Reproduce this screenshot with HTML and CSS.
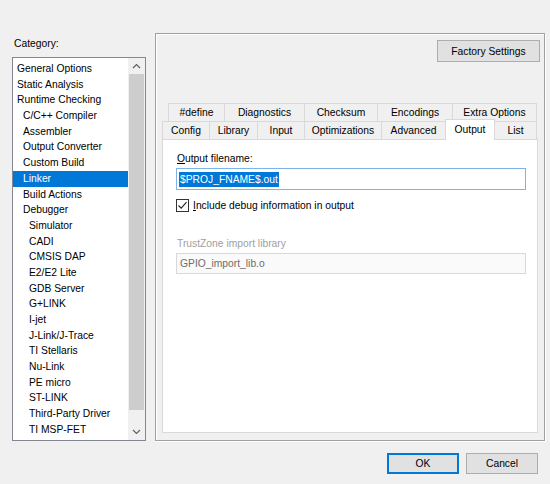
FILE: index.html
```html
<!DOCTYPE html>
<html>
<head>
<meta charset="utf-8">
<link rel="stylesheet" href="styles.css">
</head>
<body>
<div class="dialog">
  <div class="main">
    <div class="left">
      <div class="cat-label">Category:</div>
      <div class="listbox">
        <ul class="items">
          <li class="l0">General Options</li>
          <li class="l0">Static Analysis</li>
          <li class="l0">Runtime Checking</li>
          <li class="l1">C/C++ Compiler</li>
          <li class="l1">Assembler</li>
          <li class="l1">Output Converter</li>
          <li class="l1">Custom Build</li>
          <li class="l1 sel">Linker</li>
          <li class="l1">Build Actions</li>
          <li class="l1">Debugger</li>
          <li class="l2">Simulator</li>
          <li class="l2">CADI</li>
          <li class="l2">CMSIS DAP</li>
          <li class="l2">E2/E2 Lite</li>
          <li class="l2">GDB Server</li>
          <li class="l2">G+LINK</li>
          <li class="l2">I-jet</li>
          <li class="l2">J-Link/J-Trace</li>
          <li class="l2">TI Stellaris</li>
          <li class="l2">Nu-Link</li>
          <li class="l2">PE micro</li>
          <li class="l2">ST-LINK</li>
          <li class="l2">Third-Party Driver</li>
          <li class="l2">TI MSP-FET</li>
        </ul>
        <div class="scrollbar">
          <div class="sb-btn"><svg width="9" height="6" viewBox="0 0 9 6"><path d="M1 5 L4.5 1.5 L8 5" fill="none" stroke="#606060" stroke-width="1.2"/></svg></div>
          <div class="sb-track"><div class="sb-thumb"></div></div>
          <div class="sb-btn"><svg width="9" height="6" viewBox="0 0 9 6"><path d="M1 1 L4.5 4.5 L8 1" fill="none" stroke="#606060" stroke-width="1.2"/></svg></div>
        </div>
      </div>
    </div>
    <div class="frame">
      <div class="frame-top">
        <button class="btn factory">Factory Settings</button>
      </div>
      <div class="tabctl">
        <div class="tabrow row1">
          <div class="tab" style="width:56px">#define</div>
          <div class="tab" style="width:80px">Diagnostics</div>
          <div class="tab" style="width:73px">Checksum</div>
          <div class="tab" style="width:75px">Encodings</div>
          <div class="tab" style="width:85px">Extra Options</div>
        </div>
        <div class="tabrow row2">
          <div class="tab" style="width:47px">Config</div>
          <div class="tab" style="width:48px">Library</div>
          <div class="tab" style="width:47px">Input</div>
          <div class="tab" style="width:77px">Optimizations</div>
          <div class="tab" style="width:64px">Advanced</div>
          <div class="tab active" style="width:50px">Output</div>
          <div class="tab" style="width:42px">List</div>
        </div>
        <div class="page">
          <div class="field-label"><u>O</u>utput filename:</div>
          <div class="textbox focus"><span class="hl">$PROJ_FNAME$.out</span></div>
          <div class="check-row">
            <span class="checkbox"><svg width="11" height="11" viewBox="0 0 11 11"><path d="M1.5 5.5 L4.2 8.2 L9.5 2.2" fill="none" stroke="#222" stroke-width="1.1"/></svg></span>
            <span class="check-label"><u>I</u>nclude debug information in output</span>
          </div>
          <div class="field-label disabled">TrustZone import library</div>
          <div class="textbox dis">GPIO_import_lib.o</div>
        </div>
      </div>
    </div>
  </div>
  <div class="footer">
    <button class="btn ok">OK</button>
    <button class="btn cancel">Cancel</button>
  </div>
</div>
</body>
</html>
```
FILE: styles.css
```css
html, body {
  margin: 0;
  padding: 0;
}
body {
  width: 550px;
  height: 484px;
  overflow: hidden;
  background: #f0f0f0;
  font-family: "Liberation Sans", Arial, sans-serif;
  font-size: 10.3px;
  color: #000;
}
.dialog {
  display: flex;
  flex-direction: column;
  padding: 33px 5px 0 12px;
}
.main {
  display: flex;
  gap: 9px;
}
.left {
  width: 134px;
  display: flex;
  flex-direction: column;
}
.cat-label {
  padding: 4px 0 0 2px;
  line-height: 14px;
  margin-bottom: 6px;
}
.listbox {
  box-sizing: border-box;
  height: 384px;
  border: 1px solid #828790;
  background: #fff;
  display: flex;
}
.items {
  list-style: none;
  margin: 0;
  padding: 3px 0 0 0;
  flex: 1;
}
.items li {
  height: 15.7px;
  line-height: 15.7px;
  white-space: nowrap;
}
.l0 { padding-left: 4px; }
.l1 { padding-left: 10px; }
.l2 { padding-left: 16px; }
.items li.sel {
  background: #0078d7;
  color: #fff;
}
.scrollbar {
  width: 17px;
  display: flex;
  flex-direction: column;
  background: #f0f0f0;
}
.sb-btn {
  height: 16px;
  display: flex;
  align-items: center;
  justify-content: center;
}
.sb-btn:last-child {
  height: 17px;
}
.sb-track {
  flex: 1;
  padding: 0 1px;
}
.sb-thumb {
  height: 336px;
  background: #cdcdcd;
}
.frame {
  box-sizing: border-box;
  width: 390px;
  height: 408px;
  border: 1px solid #a0a0a0;
  box-shadow: inset 1px 1px 0 #fff, 1px 1px 0 #fff;
  padding: 6px 4px 7px 6px;
  display: flex;
  flex-direction: column;
}
.frame-top {
  display: flex;
  justify-content: flex-end;
  height: 22px;
  margin-bottom: 41px;
}
.btn {
  font-family: "Liberation Sans", Arial, sans-serif;
  font-size: 10.3px;
  color: #000;
  background: #e1e1e1;
  border: 1px solid #adadad;
  padding: 0;
  margin: 0;
  box-sizing: border-box;
}
.factory {
  width: 103px;
  height: 22px;
}
.tabctl {
  flex: 1;
  display: flex;
  flex-direction: column;
  margin-right: 2px;
}
.tabrow {
  display: flex;
  height: 18px;
}
.row1 {
  margin-left: 6px;
}
.tab {
  box-sizing: border-box;
  height: 18px;
  line-height: 17px;
  text-align: center;
  white-space: nowrap;
  border-top: 1px solid #d9d9d9;
  border-left: 1px solid #d9d9d9;
  background: #f0f0f0;
}
.tab:last-child {
  border-right: 1px solid #d9d9d9;
}
.tab.active {
  background: #fff;
  height: 21px;
  margin-top: -2px;
  line-height: 19px;
  border-right: 1px solid #d9d9d9;
  position: relative;
  z-index: 1;
}
.tab.active + .tab {
  border-left: none;
}
.page {
  flex: 1;
  box-sizing: border-box;
  background: #fff;
  border: 1px solid #d9d9d9;
  padding: 11px 11px 0 13px;
  display: flex;
  flex-direction: column;
  align-items: flex-start;
}
.field-label {
  line-height: 15px;
  padding-left: 1px;
  margin-bottom: 2px;
}
.field-label.disabled {
  color: #a0a0a0;
  line-height: 14px;
}
.textbox {
  box-sizing: border-box;
  width: 350px;
  height: 22px;
  border: 1px solid #7eb4ea;
  padding: 0 0 0 2px;
  display: flex;
  align-items: center;
  white-space: nowrap;
}
.hl {
  background: #0078d7;
  color: #fff;
  line-height: 15px;
  padding: 0 1px;
}
.textbox.dis {
  height: 21px;
  border-color: #d9d9d9;
  background: #fafafa;
  color: #6d6d6d;
  padding-left: 3px;
}
.check-row {
  display: flex;
  align-items: center;
  margin-top: 9px;
  margin-bottom: 25px;
  height: 13px;
}
.checkbox {
  box-sizing: border-box;
  width: 13px;
  height: 13px;
  border: 1px solid #333;
  background: #fff;
  display: flex;
  align-items: center;
  justify-content: center;
}
.check-label {
  margin-left: 4px;
  line-height: 14px;
}
.footer {
  display: flex;
  justify-content: flex-end;
  gap: 7px;
  margin-top: 12px;
  padding-right: 7px;
}
.ok, .cancel {
  width: 72px;
  height: 21px;
}
.ok {
  border: 1px solid #0078d7;
  box-shadow: inset 0 0 0 1px #0078d7;
}
```
